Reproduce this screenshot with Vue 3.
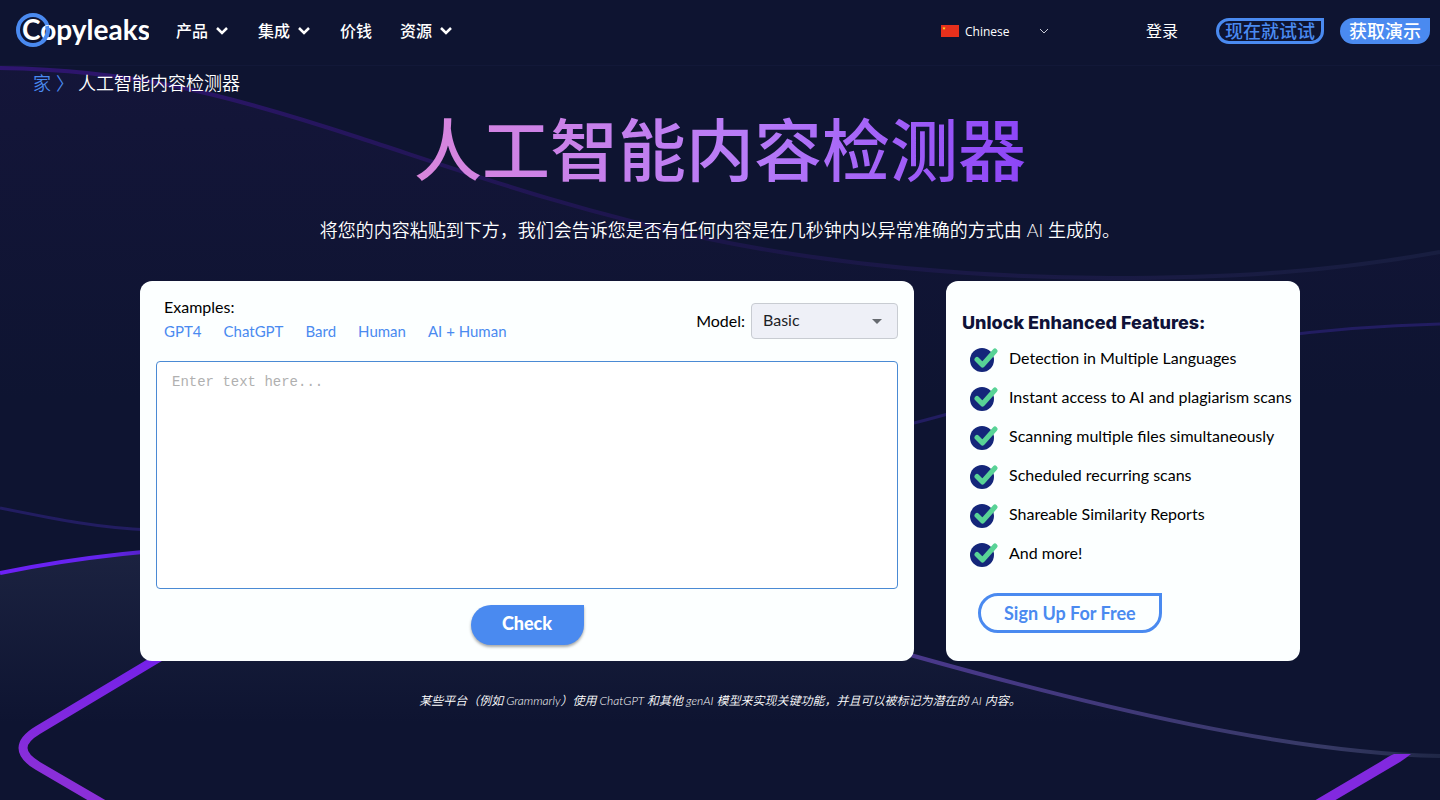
<script setup>
import { ref } from 'vue';

const navItems = [
  { label: '产品', menu: true },
  { label: '集成', menu: true },
  { label: '价钱', menu: false },
  { label: '资源', menu: true },
];

const examples = ['GPT4', 'ChatGPT', 'Bard', 'Human', 'AI + Human'];

const features = [
  'Detection in Multiple Languages',
  'Instant access to AI and plagiarism scans',
  'Scanning multiple files simultaneously',
  'Scheduled recurring scans',
  'Shareable Similarity Reports',
  'And more!',
];

const language = ref('zh');
const model = ref('basic');
const content = ref('');
</script>

<template>
  <div class="page">
    <svg class="backdrop" viewBox="0 0 1440 800" preserveAspectRatio="xMidYMin slice" aria-hidden="true">
      <defs>
        <linearGradient id="hill-fill" x1="0" y1="0" x2="0" y2="1">
          <stop offset="0" stop-color="#1c2341" />
          <stop offset="0.7" stop-color="#0e1431" />
        </linearGradient>
        <linearGradient id="hill-line" gradientUnits="userSpaceOnUse" x1="0" y1="0" x2="1440" y2="0">
          <stop offset="0" stop-color="#6d20f5" />
          <stop offset="0.07" stop-color="#6424ee" />
          <stop offset="0.12" stop-color="#4a1fae" />
          <stop offset="0.63" stop-color="#4a388c" />
          <stop offset="0.92" stop-color="#373a66" />
          <stop offset="1" stop-color="#1f2746" />
        </linearGradient>
        <linearGradient id="wave-line" gradientUnits="userSpaceOnUse" x1="0" y1="0" x2="1440" y2="0">
          <stop offset="0" stop-color="#2f1570" />
          <stop offset="0.5" stop-color="#1b1649" />
          <stop offset="1" stop-color="#181e40" />
        </linearGradient>
        <linearGradient id="wave-fill" x1="0" y1="0" x2="0" y2="1">
          <stop offset="0" stop-color="#18163f" />
          <stop offset="1" stop-color="#0e1431" />
        </linearGradient>
        <linearGradient id="chevron" gradientUnits="userSpaceOnUse" x1="0" y1="650" x2="0" y2="770">
          <stop offset="0" stop-color="#7320ea" />
          <stop offset="1" stop-color="#8a2fd8" />
        </linearGradient>
      </defs>
      <path d="M0 68C130 70 220 92 360 138C560 203 750 276 1110 278C1230 278 1330 272 1440 252V400H0Z" fill="url(#wave-fill)" opacity="0.6" />
      <path d="M0 68C130 70 220 92 360 138C560 203 750 276 1110 278C1230 278 1330 272 1440 252" fill="none" stroke="url(#wave-line)" stroke-width="4" />
      <path d="M0 508C60 520 100 528 150 530C450 535 700 475 914 423C1080 380 1200 330 1440 324" fill="none" stroke="#221d61" stroke-width="3" />
      <path d="M0 573C100 552 230 540 400 545C650 560 760 612 914 656C1100 708 1290 753 1440 756V800H0Z" fill="url(#hill-fill)" />
      <path d="M0 573C100 552 230 540 400 545C650 560 760 612 914 656C1100 708 1290 753 1440 756" fill="none" stroke="url(#hill-line)" stroke-width="4" />
      <path d="M170 651L38 730Q8 748 38 766L110 808" fill="none" stroke="url(#chevron)" stroke-width="9" />
      <path d="M1302 808L1380 762Q1389 756 1394 754H1411Q1406 758 1400 762L1322 808Z" fill="#8229df" />
    </svg>

    <header class="topbar">
      <a class="logo" href="#" aria-label="Copyleaks">
        <svg width="133" height="38" viewBox="0 0 133 38">
          <circle cx="17" cy="18" r="15" fill="none" stroke="#4a8af0" stroke-width="4" />
          <text x="6" y="28" class="logo-text">Copyleaks</text>
          <path d="M31 14a15 15 0 0 1-5 16" fill="none" stroke="#4a8af0" stroke-width="4" />
        </svg>
      </a>
      <nav class="nav">
        <a v-for="item in navItems" :key="item.label" class="nav-link" href="#">
          {{ item.label }}
          <svg v-if="item.menu" width="12" height="8" viewBox="0 0 12 8">
            <path d="M1 1l5 5 5-5" fill="none" stroke="#fff" stroke-width="2.500" />
          </svg>
        </a>
      </nav>
      <div class="account">
        <div class="language">
          <svg width="18" height="12" viewBox="0 0 18 12" aria-hidden="true">
            <rect width="18" height="12" fill="#e6301c" />
            <path d="M3 1.500l.5 1.200h1.300l-1 .8.400 1.300L3 4l-1.200.8.400-1.300-1-.8h1.300z" fill="#ffd51f" />
          </svg>
          <select v-model="language" class="language-select" aria-label="Language">
            <option value="zh">Chinese</option>
            <option value="en">English</option>
          </select>
          <svg width="10" height="6" viewBox="0 0 10 6" aria-hidden="true">
            <path d="M1 1l4 4 4-4" fill="none" stroke="#c8cad6" />
          </svg>
        </div>
        <a class="login" href="#">登录</a>
        <a class="pill pill-outline" href="#">现在就试试</a>
        <a class="pill pill-solid" href="#">获取演示</a>
      </div>
    </header>

    <nav class="breadcrumb">
      <a href="#">家 〉</a>
      <span>人工智能内容检测器</span>
    </nav>

    <main class="content">
      <h1 class="title">人工智能内容检测器</h1>
      <p class="subtitle">将您的内容粘贴到下方，我们会告诉您是否有任何内容是在几秒钟内以异常准确的方式由 AI 生成的。</p>

      <div class="panels">
        <form class="card detector" @submit.prevent>
          <div class="toolbar">
            <div>
              <div class="examples-label">Examples:</div>
              <div class="examples">
                <button v-for="example in examples" :key="example" type="button" class="example">{{ example }}</button>
              </div>
            </div>
            <div class="model">
              <label for="model">Model:</label>
              <div class="model-box">
                <select id="model" v-model="model" class="model-select">
                  <option value="basic">Basic</option>
                  <option value="advanced">Advanced</option>
                </select>
                <svg class="model-arrow" width="10" height="5" viewBox="0 0 10 5" aria-hidden="true">
                  <path d="M0 0h10L5 5z" fill="#666a70" />
                </svg>
              </div>
            </div>
          </div>
          <textarea v-model="content" class="editor" placeholder="Enter text here..." aria-label="Text to check"></textarea>
          <button type="submit" class="check">Check</button>
        </form>

        <aside class="card upsell">
          <h2 class="upsell-title">Unlock Enhanced Features:</h2>
          <ul class="features">
            <li v-for="feature in features" :key="feature" class="feature">
              <svg width="28" height="24" viewBox="0 0 28 24" aria-hidden="true">
                <circle cx="12" cy="12" r="12" fill="#14267a" />
                <path d="M7 11.500l5.500 5.500L25 3" fill="none" stroke="#58d396" stroke-width="5" stroke-linecap="round" stroke-linejoin="round" />
              </svg>
              <span>{{ feature }}</span>
            </li>
          </ul>
          <a class="signup" href="#">Sign Up For Free</a>
        </aside>
      </div>

      <p class="note">某些平台（例如 Grammarly）使用 ChatGPT 和其他 genAI 模型来实现关键功能，并且可以被标记为潜在的 AI 内容。</p>
    </main>
  </div>
</template>

<style>
body {
  background: #0e1431;
}
</style>

<style scoped>
.page {
  position: relative;
  min-height: 100vh;
  overflow: hidden;
  background: #0e1431;
  color: #fff;
  font-family: Lato, "Noto Sans CJK SC", sans-serif;
  font-size: 16px;
}
.page * {
  box-sizing: border-box;
}
a {
  text-decoration: none;
}
.backdrop {
  position: absolute;
  inset: 0;
  width: 100%;
  height: 100%;
}
.topbar {
  position: relative;
  display: flex;
  align-items: center;
  height: 66px;
  padding: 0 10px 3px 16px;
  background: #0e1431;
  border-bottom: 1px solid #121838;
}
.logo {
  display: flex;
}
.logo-text {
  font-family: Lato, sans-serif;
  font-size: 28px;
  font-weight: 700;
  fill: #fff;
}
.nav {
  display: flex;
  gap: 28px;
  margin-left: 27px;
}
.nav-link {
  display: flex;
  align-items: center;
  gap: 8px;
  color: #fff;
  font-weight: 500;
  line-height: 22px;
}
.nav-link svg {
  margin-right: 2px;
}
.account {
  display: flex;
  align-items: center;
  margin-left: auto;
}
.language {
  display: flex;
  align-items: center;
  gap: 6px;
  margin-right: 97px;
}
.language-select {
  width: 68px;
  padding: 0;
  border: 0;
  appearance: none;
  background: transparent;
  color: #fff;
  font-family: "Open Sans", sans-serif;
  font-size: 12px;
}
.login {
  margin-right: 38px;
  color: #fff;
  line-height: 22px;
}
.pill {
  padding: 0 9px;
  border-radius: 14px 0 14px 14px;
  font-size: 18px;
  font-weight: 500;
  line-height: 26px;
}
.pill-outline {
  margin-right: 16px;
  padding: 0 6px;
  border: 3px solid #4a8af0;
  color: #4a8af0;
  line-height: 20px;
}
.pill-solid {
  background: #4a8af0;
  color: #fff;
}
.breadcrumb {
  position: relative;
  display: flex;
  gap: 4px;
  padding: 4px 33px 0;
  font-size: 18px;
  font-weight: 350;
  line-height: 26px;
}
.breadcrumb a {
  color: #4a8af0;
}
.content {
  position: relative;
  max-width: 1160px;
  margin: 0 auto;
  text-align: center;
}
.title {
  width: fit-content;
  margin: 8px auto 0;
  background: linear-gradient(90deg, #d986dc, #b77bf8 55%, #8c45f7);
  background-clip: text;
  color: transparent;
  font-size: 68px;
  font-weight: 500;
  line-height: 92px;
}
.subtitle {
  margin: 20px 0 0;
  font-size: 18px;
  font-weight: 350;
  line-height: 28px;
}
.panels {
  display: grid;
  grid-template-columns: minmax(0, 1fr) 354px;
  gap: 32px;
  margin-top: 37px;
  color: #000;
  text-align: left;
}
.card {
  padding: 16px;
  border-radius: 12px;
  background: #fcffff;
}
.detector {
  display: flex;
  flex-direction: column;
}
.toolbar {
  display: flex;
  justify-content: space-between;
  height: 64px;
  padding-left: 8px;
  line-height: 20px;
}
.examples {
  display: flex;
  gap: 22px;
  margin-top: 4px;
}
.example {
  padding: 0;
  border: 0;
  background: none;
  color: #4a8af0;
  font: inherit;
  font-size: 15px;
  line-height: 20px;
  cursor: pointer;
}
.model {
  display: flex;
  align-items: center;
  gap: 6px;
  height: 48px;
}
.model-box {
  position: relative;
  width: 147px;
}
.model-select {
  width: 100%;
  height: 36px;
  padding: 0 32px 2px 11px;
  border: 1px solid #c8ccd2;
  border-radius: 4px;
  appearance: none;
  background: #eef0f7;
  color: #1d2226;
  font: inherit;
}
.model-arrow {
  position: absolute;
  top: 16px;
  right: 16px;
  pointer-events: none;
}
.editor {
  height: 228px;
  padding: 12px 15px;
  border: 1px solid #4a8ad4;
  border-radius: 4px;
  background: #fff;
  font-family: "Liberation Mono", monospace;
  font-size: 14px;
  resize: none;
}
.editor::placeholder {
  color: #b0b0b0;
}
.check {
  align-self: center;
  width: 113px;
  height: 40px;
  margin-top: 16px;
  padding: 0 0 4px;
  border: 0;
  border-radius: 20px 0 20px 20px;
  background: #4a8af0;
  box-shadow: 0 2px 3px rgba(0, 0, 0, 0.35);
  color: #fff;
  font: inherit;
  font-size: 18px;
  font-weight: 900;
  cursor: pointer;
}
.upsell-title {
  margin: 15px 0 0;
  color: #0f1238;
  font-family: Inter, sans-serif;
  font-size: 18px;
  font-weight: 800;
  line-height: 22px;
}
.features {
  margin: 14px 0 0;
  padding: 0 0 0 8px;
  list-style: none;
}
.feature {
  display: flex;
  align-items: center;
  gap: 11px;
  height: 24px;
  margin-bottom: 15px;
  white-space: nowrap;
}
.feature svg {
  flex-shrink: 0;
}
.feature span {
  padding-bottom: 5px;
}
.signup {
  display: inline-block;
  margin: 11px 0 12px 16px;
  padding: 0 23px;
  border: 3px solid #4a8af0;
  border-radius: 20px 0 20px 20px;
  color: #4a8af0;
  font-size: 18px;
  font-weight: 700;
  line-height: 34px;
}
.note {
  margin: 30px 0 0;
  font-size: 12px;
  font-style: italic;
  font-weight: 350;
  line-height: 20px;
}
</style>
